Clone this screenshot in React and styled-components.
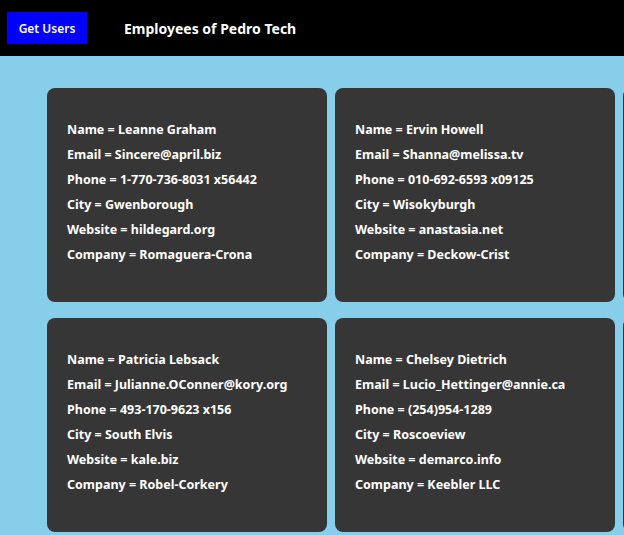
import React from "react";
import styled, { createGlobalStyle } from "styled-components";

const users = [
  {
    name: "Leanne Graham",
    email: "Sincere@april.biz",
    phone: "1-770-736-8031 x56442",
    city: "Gwenborough",
    website: "hildegard.org",
    company: "Romaguera-Crona",
  },
  {
    name: "Ervin Howell",
    email: "Shanna@melissa.tv",
    phone: "010-692-6593 x09125",
    city: "Wisokyburgh",
    website: "anastasia.net",
    company: "Deckow-Crist",
  },
  {
    name: "Clementine Bauch",
    email: "Nathan@yesenia.net",
    phone: "1-463-123-4447",
    city: "McKenziehaven",
    website: "ramiro.info",
    company: "Romaguera-Jacobson",
  },
  {
    name: "Patricia Lebsack",
    email: "Julianne.OConner@kory.org",
    phone: "493-170-9623 x156",
    city: "South Elvis",
    website: "kale.biz",
    company: "Robel-Corkery",
  },
  {
    name: "Chelsey Dietrich",
    email: "Lucio_Hettinger@annie.ca",
    phone: "(254)954-1289",
    city: "Roscoeview",
    website: "demarco.info",
    company: "Keebler LLC",
  },
  {
    name: "Mrs. Dennis Schulist",
    email: "Karley_Dach@jasper.info",
    phone: "1-477-935-8478 x6430",
    city: "South Christy",
    website: "ola.org",
    company: "Considine-Lockman",
  },
];

const GlobalStyle = createGlobalStyle`
  body {
    margin: 0;
    background-color: skyblue;
    font-family: "Noto Sans", "Open Sans", sans-serif;
    overflow: hidden;
  }
`;

const App = () => {
  return (
    <>
      <GlobalStyle />
      <Header>
        <Button>Get Users</Button>
        <Title>Employees of Pedro Tech</Title>
      </Header>
      <Grid>
        {users.map((u) => (
          <Card key={u.email}>
            <Line>Name = {u.name}</Line>
            <Line>Email = {u.email}</Line>
            <Line>Phone = {u.phone}</Line>
            <Line>City = {u.city}</Line>
            <Line>Website = {u.website}</Line>
            <Line>Company = {u.company}</Line>
          </Card>
        ))}
      </Grid>
    </>
  );
};

export default App;

const Header = styled.div`
  display: flex;
  align-items: center;
  height: 56px;
  padding-left: 7px;
  background-color: black;
`;

const Button = styled.button`
  width: 80px;
  height: 32px;
  border: none;
  background-color: blue;
  color: white;
  font-family: "Noto Sans", sans-serif;
  font-size: 12px;
  font-weight: 600;
  padding: 0;
`;

const Title = styled.div`
  margin-left: 37px;
  color: white;
  font-size: 14px;
  font-weight: 700;
`;

const Grid = styled.div`
  display: grid;
  grid-template-columns: repeat(3, 280px);
  column-gap: 8px;
  row-gap: 16px;
  padding: 32px 0 0 47px;
`;

const Card = styled.div`
  box-sizing: border-box;
  height: 214px;
  padding: 29px 20px 0 20px;
  border-radius: 8px;
  background-color: #363636;
  color: white;
`;

const Line = styled.div`
  height: 25px;
  line-height: 25px;
  font-size: 12.5px;
  font-weight: 700;
  white-space: nowrap;
`;
